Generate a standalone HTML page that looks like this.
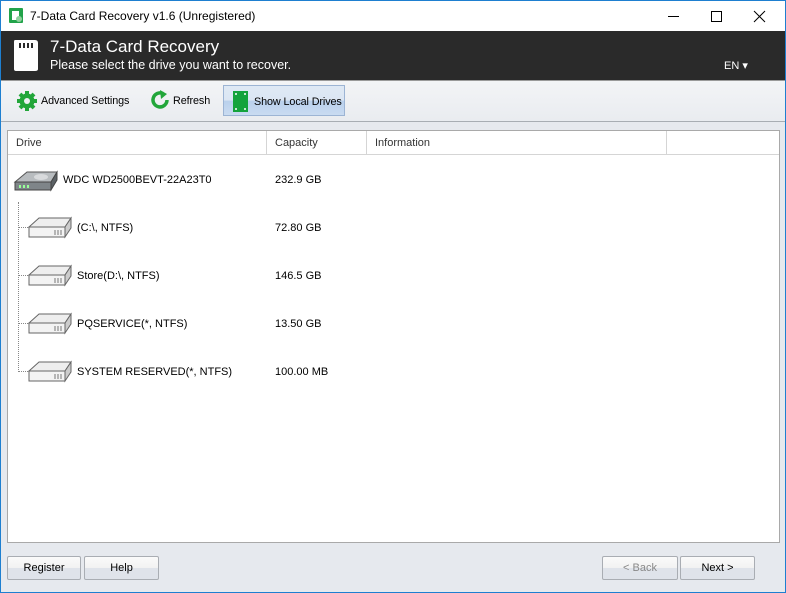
<!DOCTYPE html>
<html><head><style>
*{margin:0;padding:0;box-sizing:border-box}
body{width:786px;height:593px;overflow:hidden;font-family:"Liberation Sans",sans-serif;font-size:11px;color:#000;background:#e6e9ee;position:relative}
.win{position:absolute;left:0;top:0;width:786px;height:593px;border:1px solid #1e7fd0;border-top:none}
.title{position:absolute;left:0;top:0;width:786px;height:31px;background:#fff;border-top:1px solid #1e7fd0}
.title span{position:absolute;left:30px;top:8px;font-size:12px}
.hdr{position:absolute;left:1px;top:31px;width:784px;height:49px;background:#2a2a2a;color:#fff}
.tb{position:absolute;left:1px;top:80px;width:784px;height:42px;background:linear-gradient(#f3f4f6,#e9ecf0);border-top:1px solid #9a9a9a;border-bottom:1px solid #a8adb3}
.abs{position:absolute}
.panel{position:absolute;left:7px;top:130px;width:773px;height:413px;background:#fff;border:1px solid #a9a9a9}
.colh{position:absolute;top:0;height:24px;border-bottom:1px solid #d5d5d5;line-height:24px;padding-left:8px;color:#333}
.btn{position:absolute;top:556px;height:24px;border:1px solid #a9adb3;border-radius:2px;background:linear-gradient(#fafafa 0%,#f2f2f2 50%,#dfe3ea 51%,#dfe3ea 100%);text-align:center;line-height:22px;font-size:11px}
.row{position:absolute;font-size:11px}
.tt{font-size:10.8px;letter-spacing:-0.1px}
</style></head><body>
<div class="title">
 <svg class="abs" style="left:9px;top:7px" width="15" height="16"><rect x="0" y="0" width="14" height="15" rx="1" fill="#22a34a"/><rect x="3" y="3" width="7" height="9" fill="#fff"/><circle cx="10" cy="11" r="3" fill="#8fd19e"/></svg>
 <span>7-Data Card Recovery v1.6 (Unregistered)</span>
 <svg class="abs" style="left:668px;top:8px" width="110" height="16"><line x1="0" y1="7.5" x2="11" y2="7.5" stroke="#000"/><rect x="43.5" y="2.5" width="10" height="10" fill="none" stroke="#000"/><path d="M86 2 L97 13 M97 2 L86 13" stroke="#000"/></svg>
</div>
<div class="hdr">
 <svg class="abs" style="left:12px;top:9px" width="28" height="32"><path d="M2 0 H22 Q25 0 25 3 V29 Q25 31 22 31 H3 Q1 31 1 29 V2 Q1 0 2 0Z" fill="#fff"/><g fill="#2a2a2a"><rect x="6" y="3" width="2" height="5"/><rect x="10" y="3" width="2" height="5"/><rect x="14" y="3" width="2" height="5"/><rect x="18" y="3" width="2" height="5"/></g></svg>
 <div class="abs" style="left:49px;top:6px;font-size:17px">7-Data Card Recovery</div>
 <div class="abs" style="left:49px;top:27px;font-size:12.5px">Please select the drive you want to recover.</div>
 <div class="abs" style="left:723px;top:28px;font-size:11px">EN ▾</div>
</div>
<div class="tb">
 <svg class="abs" style="left:15px;top:9px" width="22" height="22" viewBox="0 0 22 22"><g fill="#22a63a"><circle cx="11" cy="11" r="7.5"/><g stroke="#22a63a" stroke-width="4"><line x1="11" y1="1" x2="11" y2="21"/><line x1="1" y1="11" x2="21" y2="11"/><line x1="4" y1="4" x2="18" y2="18"/><line x1="18" y1="4" x2="4" y2="18"/></g></g><circle cx="11" cy="11" r="3" fill="#eef0f3"/></svg>
 <div class="abs tt" style="left:40px;top:14px">Advanced Settings</div>
 <svg class="abs" style="left:148px;top:8px" width="22" height="22" viewBox="0 0 22 22"><path d="M18 11 A7 7 0 1 1 14 4.6" fill="none" stroke="#22a63a" stroke-width="3.5"/><path d="M11 1 L18 5 L12 10Z" fill="#22a63a"/></svg>
 <div class="abs tt" style="left:172px;top:14px">Refresh</div>
 <div class="abs" style="left:222px;top:4px;width:122px;height:31px;border:1px solid #9cb4d4;background:linear-gradient(#dfe9f5 0%,#dbe6f3 50%,#b9d0ec 51%,#c9dbf1 100%)"></div>
 <svg class="abs" style="left:232px;top:10px" width="16" height="22"><rect x="0" y="0" width="15" height="21" fill="#14a33c"/><g fill="#fff"><circle cx="3" cy="3" r="1"/><circle cx="12" cy="3" r="1"/><circle cx="3" cy="18" r="1"/><circle cx="12" cy="18" r="1"/></g></svg>
 <div class="abs tt" style="left:253px;top:15px">Show Local Drives</div>
</div>
<div class="panel">
 <div class="colh" style="left:0;width:259px;border-right:1px solid #d5d5d5">Drive</div>
 <div class="colh" style="left:259px;width:100px;border-right:1px solid #d5d5d5">Capacity</div>
 <div class="colh" style="left:359px;width:300px;border-right:1px solid #d5d5d5">Information</div>
 <div class="colh" style="left:659px;width:112px"></div>
 <div class="abs" style="left:10px;top:71px;width:1px;height:170px;border-left:1px dotted #888"></div>
 <div class="abs" style="left:10px;top:96px;width:10px;border-top:1px dotted #888"></div>
 <div class="abs" style="left:10px;top:144px;width:10px;border-top:1px dotted #888"></div>
 <div class="abs" style="left:10px;top:192px;width:10px;border-top:1px dotted #888"></div>
 <div class="abs" style="left:10px;top:240px;width:10px;border-top:1px dotted #888"></div>
 <svg class="abs" style="left:5px;top:37px" width="46" height="26"><path d="M2 14 L14 4 H44 L38 14Z" fill="#b8bcbf" stroke="#555"/><path d="M2 14 H38 V22 H2Z" fill="#7f8589" stroke="#444"/><path d="M38 14 L44 4 V12 L38 22Z" fill="#5c6266" stroke="#444"/><ellipse cx="28" cy="9" rx="7" ry="3" fill="#d8dadc"/><g fill="#9f9"><rect x="6" y="17" width="2" height="3"/><rect x="10" y="17" width="2" height="3"/><rect x="14" y="17" width="2" height="3"/></g></svg>
 <div class="row" style="left:55px;top:43px">WDC WD2500BEVT-22A23T0</div>
 <div class="row" style="left:267px;top:43px">232.9 GB</div>
 <svg class="abs" style="left:19px;top:84px" width="48" height="26"><path d="M2 12 L12 3 H44 L38 12Z" fill="#eee" stroke="#666"/><path d="M2 12 H38 V22 H2Z" fill="#f3f3f3" stroke="#666"/><path d="M38 12 L44 3 V13 L38 22Z" fill="#ccc" stroke="#666"/><g stroke="#777"><line x1="28" y1="15" x2="28" y2="20"/><line x1="31" y1="15" x2="31" y2="20"/><line x1="34" y1="15" x2="34" y2="20"/></g></svg>
 <div class="row" style="left:69px;top:91px">(C:\, NTFS)</div><div class="row" style="left:267px;top:91px">72.80 GB</div>
 <svg class="abs" style="left:19px;top:132px" width="48" height="26"><path d="M2 12 L12 3 H44 L38 12Z" fill="#eee" stroke="#666"/><path d="M2 12 H38 V22 H2Z" fill="#f3f3f3" stroke="#666"/><path d="M38 12 L44 3 V13 L38 22Z" fill="#ccc" stroke="#666"/><g stroke="#777"><line x1="28" y1="15" x2="28" y2="20"/><line x1="31" y1="15" x2="31" y2="20"/><line x1="34" y1="15" x2="34" y2="20"/></g></svg>
 <div class="row" style="left:69px;top:139px">Store(D:\, NTFS)</div><div class="row" style="left:267px;top:139px">146.5 GB</div>
 <svg class="abs" style="left:19px;top:180px" width="48" height="26"><path d="M2 12 L12 3 H44 L38 12Z" fill="#eee" stroke="#666"/><path d="M2 12 H38 V22 H2Z" fill="#f3f3f3" stroke="#666"/><path d="M38 12 L44 3 V13 L38 22Z" fill="#ccc" stroke="#666"/><g stroke="#777"><line x1="28" y1="15" x2="28" y2="20"/><line x1="31" y1="15" x2="31" y2="20"/><line x1="34" y1="15" x2="34" y2="20"/></g></svg>
 <div class="row" style="left:69px;top:187px">PQSERVICE(*, NTFS)</div><div class="row" style="left:267px;top:187px">13.50 GB</div>
 <svg class="abs" style="left:19px;top:228px" width="48" height="26"><path d="M2 12 L12 3 H44 L38 12Z" fill="#eee" stroke="#666"/><path d="M2 12 H38 V22 H2Z" fill="#f3f3f3" stroke="#666"/><path d="M38 12 L44 3 V13 L38 22Z" fill="#ccc" stroke="#666"/><g stroke="#777"><line x1="28" y1="15" x2="28" y2="20"/><line x1="31" y1="15" x2="31" y2="20"/><line x1="34" y1="15" x2="34" y2="20"/></g></svg>
 <div class="row" style="left:69px;top:235px">SYSTEM RESERVED(*, NTFS)</div><div class="row" style="left:267px;top:235px">100.00 MB</div>
</div>
<div class="btn" style="left:7px;width:74px">Register</div>
<div class="btn" style="left:84px;width:75px">Help</div>
<div class="btn" style="left:602px;width:76px;color:#888">&lt; Back</div>
<div class="btn" style="left:680px;width:75px">Next &gt;</div>
<div class="win"></div>
</body></html>
